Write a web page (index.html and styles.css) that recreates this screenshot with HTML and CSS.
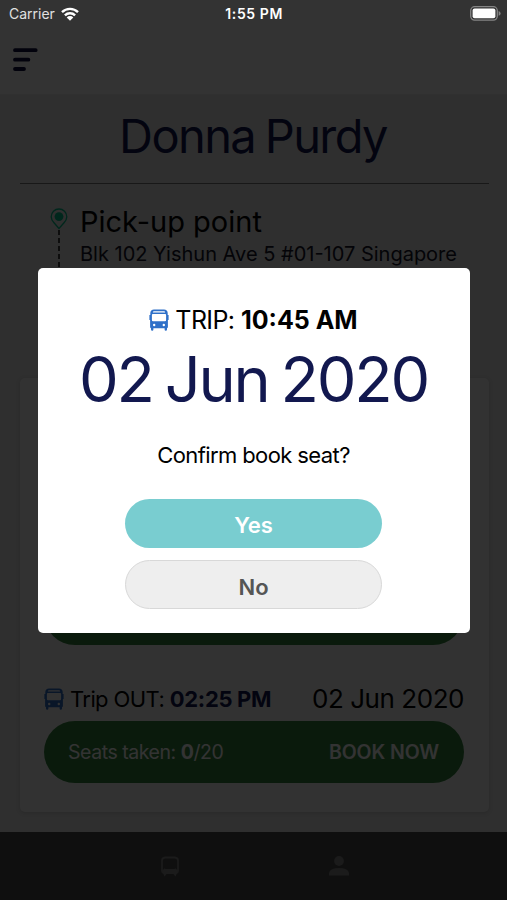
FILE: index.html
```
<!DOCTYPE html>
<html lang="en">
<head>
    <meta charset="UTF-8">
    <meta name="viewport" content="width=device-width, initial-scale=1.0">
    <title>Book Seat</title>
    <link rel="stylesheet" href="styles.css">
</head>
<body>

    <!-- Shared icons -->
    <svg class="sprite" width="0" height="0">
        <symbol id="bus" viewBox="0 0 20 22">
            <path fill-rule="evenodd" d="M5 0.5H15Q18.5 0.7 18.7 4V6H19.6V11H18.9V18Q18.9 19 18 19.2V20.5Q18 21.7 16.8 21.7Q15.6 21.7 15.6 20.5V19.3H4.4V20.5Q4.4 21.7 3.2 21.7Q2 21.7 2 20.5V19.2Q1.1 19 1.1 18V11H0.4V6H1.3V4Q1.5 0.7 5 0.5ZM5 2.2Q4 2.3 3.8 3.4H16.2Q16 2.3 15 2.2ZM3.8 5H16.2Q17.1 5 17.1 6V11Q17.1 12.2 16 12.2H4Q2.9 12.2 2.9 11V6Q2.9 5 3.8 5ZM5.2 14.8A1.2 1.2 0 1 0 5.2 17.2A1.2 1.2 0 1 0 5.2 14.8ZM14.8 14.8A1.2 1.2 0 1 0 14.8 17.2A1.2 1.2 0 1 0 14.8 14.8Z"/>
        </symbol>
    </svg>

    <div class="screen">
        <!-- Header -->
        <header>
            <svg class="menu-icon" width="26" height="24" viewBox="0 0 26 24">
                <path d="M3 2.2H23.7M3 11.7H16.4M3 21H12" fill="none" stroke="currentColor" stroke-width="3.8" stroke-linecap="round"/>
            </svg>
        </header>

        <main>
            <h1>Donna Purdy</h1>

            <!-- Pick-up point -->
            <section class="pickup">
                <div class="route">
                    <svg width="18" height="22" viewBox="0 0 18 22">
                        <path d="M9 20.5L4 14.8Q1.2 11.8 1.2 8.8A7.8 7.8 0 0 1 16.8 8.8Q16.8 11.8 14 14.8Z" fill="none" stroke="currentColor" stroke-width="1.3"/>
                        <circle cx="9" cy="8.6" r="4.4" fill="currentColor"/>
                    </svg>
                    <div class="route-line"></div>
                </div>
                <div>
                    <h2>Pick-up point</h2>
                    <p class="address">Blk 102 Yishun Ave 5 #01-107 Singapore</p>
                </div>
            </section>

            <!-- Trips -->
            <section class="trips">
                <div class="book"></div>
                <div class="trip-head">
                    <svg class="bus" width="20" height="22"><use href="#bus"/></svg>
                    <span class="trip-name">Trip OUT: <b>02:25 PM</b></span>
                    <span class="trip-date">02 Jun 2020</span>
                </div>
                <div class="book">
                    <span class="seats">Seats taken: <b>0</b>/20</span>
                    <span class="book-now">BOOK NOW</span>
                </div>
            </section>
        </main>

        <!-- Bottom tabs -->
        <footer>
            <svg width="20" height="22" viewBox="0 0 20 22">
                <path d="M5 1.5H15Q18 1.8 18 4.5V14.5Q18 17 15.5 17H4.5Q2 17 2 14.5V4.5Q2 1.8 5 1.5ZM4 13L7 16H13L16 13" fill="none" stroke="currentColor" stroke-width="1.8"/>
                <path d="M4 13H16L18 15L15.5 20.5L13 17.5H7L4.5 20.5L2 15Z" fill="currentColor"/>
            </svg>
            <svg width="20" height="20" viewBox="0 0 20 20">
                <circle cx="10" cy="5" r="4.9" fill="currentColor"/>
                <path d="M0 19.5V17Q1 12 10 12Q19 12 20 17V19.5Z" fill="currentColor"/>
            </svg>
        </footer>
    </div>

    <!-- Confirm dialog -->
    <div class="overlay">
        <div class="modal">
            <div class="modal-trip">
                <svg class="bus" width="20" height="22"><use href="#bus"/></svg>
                <span>TRIP: <b>10:45 AM</b></span>
            </div>
            <div class="modal-date">02 Jun 2020</div>
            <p class="question">Confirm book seat?</p>
            <button class="btn yes">Yes</button>
            <button class="btn no">No</button>
        </div>
    </div>

    <!-- Status bar -->
    <div class="status">
        <div class="carrier">
            <span>Carrier</span>
            <svg width="18" height="14" viewBox="0 0 18 14">
                <path d="M1 5.2A11.4 11.4 0 0 1 17 5.2M3.9 8.3A7.2 7.2 0 0 1 14.1 8.3" fill="none" stroke="#fff" stroke-width="2.4"/>
                <path d="M9 13.8L5.7 10.4A4.7 4.7 0 0 1 12.3 10.4Z" fill="#fff"/>
            </svg>
        </div>
        <span class="clock">1:55 PM</span>
        <svg class="battery" width="31" height="15" viewBox="0 0 31 15">
            <rect x="0.7" y="0.7" width="26.6" height="13.4" rx="4" fill="none" stroke="#858585" stroke-width="1.3"/>
            <rect x="2.6" y="2.6" width="22.8" height="9.6" rx="2" fill="#fff"/>
            <path d="M28.6 5Q30.6 5.8 30.6 7.4Q30.6 9 28.6 9.8Z" fill="#858585"/>
        </svg>
    </div>

</body>
</html>
```
FILE: styles.css
```
/* Global Styles */
* {
    box-sizing: border-box;
}

body {
    font-family: Inter, "Liberation Sans", sans-serif;
    margin: 0;
    background-color: #e8e8e8;
    color: #000;
}

h1, h2, p {
    margin: 0;
    font-weight: 400;
    white-space: nowrap;
}

.sprite {
    position: absolute;
}

.screen {
    display: flex;
    flex-direction: column;
    height: 900px;
    overflow: hidden;
}

header {
    height: 95px;
    padding: 48px 0 0 12px;
    background-color: #fff;
    border-bottom: 1px solid #f0f0f0;
}

.menu-icon {
    color: #0c0c3c;
}

main {
    flex: 1;
    padding: 0 18px 0 20px;
}

h1 {
    height: 89px;
    padding-right: 3px;
    border-bottom: 1px solid #777;
    color: #12184f;
    font-size: 47px;
    line-height: 81px;
    letter-spacing: -1.6px;
    word-spacing: -2px;
    text-align: center;
}

/* Pick-up point */
.pickup {
    display: flex;
    gap: 12px;
    height: 194px;
    padding: 21px 0 0 30px;
}

.route {
    display: flex;
    flex-direction: column;
    align-items: center;
    padding-top: 3px;
    color: #00c08a;
}

.route-line {
    flex: 1;
    width: 2px;
    background: repeating-linear-gradient(#444 0 5px, transparent 5px 8px);
}

h2 {
    font-size: 29px;
    line-height: 34px;
}

.address {
    color: #15152a;
    font-size: 20px;
    line-height: 30px;
}

/* Trips */
.trips {
    height: 434px;
    padding: 205px 25px 0 24px;
    border-radius: 5px;
    background-color: #fafafa;
    box-shadow: 0 1px 4px rgba(0, 0, 0, 0.15);
}

.book {
    display: flex;
    align-items: center;
    justify-content: space-between;
    height: 62px;
    padding: 0 25px 0 24px;
    border-radius: 31px;
    background-color: #32823c;
    color: #fff;
    font-size: 19.5px;
}

.trip-head {
    display: flex;
    align-items: center;
    height: 76px;
    padding-top: 31px;
    white-space: nowrap;
}

.bus {
    fill: #2f70c8;
}

.trip-name {
    margin-left: 6px;
    font-size: 22px;
    letter-spacing: -0.6px;
}

.trip-name b {
    color: #12184f;
    letter-spacing: -0.3px;
}

.trip-date {
    margin-left: auto;
    font-size: 26px;
    letter-spacing: -0.45px;
}

.seats {
    letter-spacing: -0.45px;
}

.book-now {
    font-weight: 600;
    letter-spacing: -0.1px;
}

footer {
    display: flex;
    gap: 149px;
    height: 68px;
    padding: 24px 0 0 160px;
    background-color: #4b4b4b;
    color: #858585;
}

/* Dialog */
.overlay {
    position: absolute;
    top: 0;
    left: 0;
    display: flex;
    justify-content: center;
    width: 507px;
    height: 900px;
    padding: 268px 0 0 1px;
    background-color: rgba(0, 0, 0, 0.8);
}

.modal {
    display: flex;
    flex-direction: column;
    align-items: center;
    width: 432px;
    height: 365px;
    padding: 36px 1px 0 0;
    border-radius: 5px;
    background-color: #fff;
    white-space: nowrap;
}

.modal-trip {
    display: flex;
    align-items: center;
    gap: 6px;
    height: 32px;
    font-size: 25px;
    letter-spacing: -0.6px;
}

.modal-trip b {
    letter-spacing: 0;
}

.modal-date {
    color: #12184f;
    font-size: 63px;
    line-height: 86px;
    letter-spacing: -2.2px;
    word-spacing: -3.5px;
}

.question {
    margin-top: 18px;
    font-size: 22px;
    line-height: 30px;
    letter-spacing: -0.6px;
}

.btn {
    width: 257px;
    height: 49px;
    padding: 3px 0 0;
    border: none;
    border-radius: 25px;
    font-family: inherit;
    font-size: 22px;
    font-weight: 600;
}

.yes {
    margin-top: 29px;
    background-color: #79cdd0;
    color: #fff;
}

.no {
    margin-top: 12px;
    padding-top: 5px;
    border: 1px solid #d8d8d8;
    background-color: #eee;
    color: #555;
}

/* Status bar */
.status {
    position: absolute;
    top: 0;
    left: 0;
    display: flex;
    align-items: center;
    width: 507px;
    height: 27px;
    padding: 0 6px 0 9px;
    color: #fff;
    font-size: 14px;
}

.carrier {
    display: flex;
    align-items: center;
    gap: 6px;
    flex: 1;
    color: #e0e0e0;
}

.clock {
    font-weight: 600;
    letter-spacing: 0.6px;
}

.battery {
    margin-left: 187px;
}
```
